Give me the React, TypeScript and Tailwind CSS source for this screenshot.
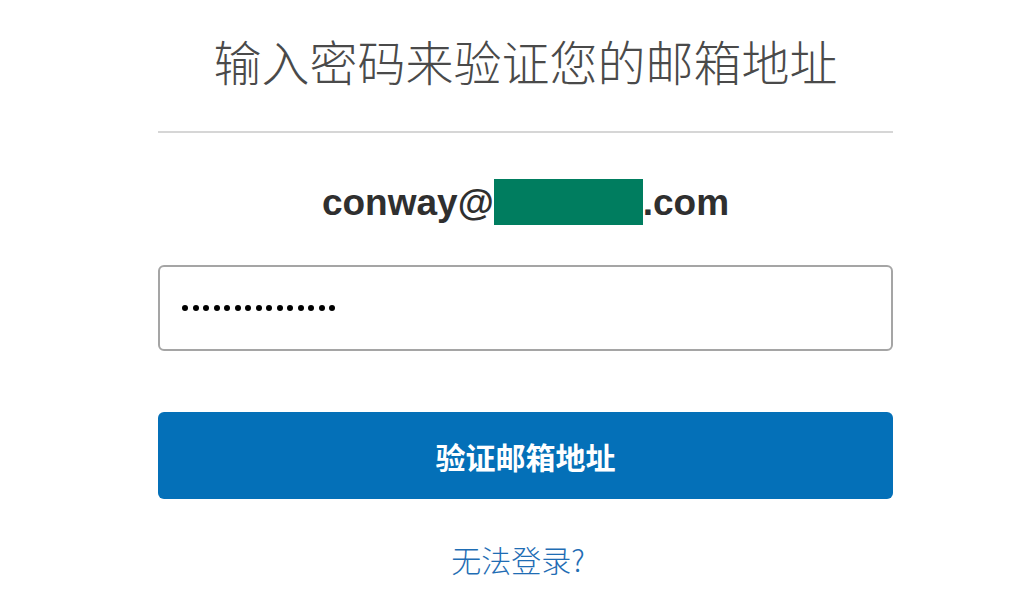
import React from "react";

const cjk = { fontFamily: '"Noto Sans CJK SC", "Noto Sans", sans-serif' };
const latin = { fontFamily: '"Liberation Sans", Arial, sans-serif' };

export default function App() {
  const dots = Array.from({ length: 15 });
  return (
    <div className="w-[1014px] h-[600px] bg-white overflow-hidden">
      <div className="ml-[158px] w-[735px] flex flex-col">
        <div
          className="mt-[33px] h-[54px] flex items-center justify-center text-[48px] font-extralight text-[#4a4a4a] leading-[54px]"
          style={cjk}
        >
          输入密码来验证您的邮箱地址
        </div>
        <div className="mt-[44px] h-[2px] bg-[#d6d6d6]" />
        <div
          className="mt-[46px] h-[46px] flex items-center justify-center text-[37px] font-bold text-[#2f2f2f] leading-none"
          style={latin}
        >
          <span>conway@</span>
          <span className="inline-block w-[149px] h-[46px] bg-[#007d5f]" />
          <span>.com</span>
        </div>
        <div className="mt-[40px] h-[86px] border-2 border-[#a5a5a5] rounded-[6px] flex items-center pl-[22px]">
          <div className="flex items-center gap-[4.5px]">
            {dots.map((_, i) => (
              <span key={i} className="block w-[6px] h-[6px] rounded-full bg-black" />
            ))}
          </div>
        </div>
        <button
          className="mt-[61px] h-[87px] w-full bg-[#0470b8] rounded-[6px] flex items-center justify-center text-white text-[30px] font-bold leading-none"
          style={cjk}
        >
          验证邮箱地址
        </button>
        <div
          className="mt-[40px] h-[40px] flex items-center justify-center pr-[15px] text-[30px] font-light text-[#1f6db4] leading-none"
          style={cjk}
        >
          无法登录?
        </div>
      </div>
    </div>
  );
}
